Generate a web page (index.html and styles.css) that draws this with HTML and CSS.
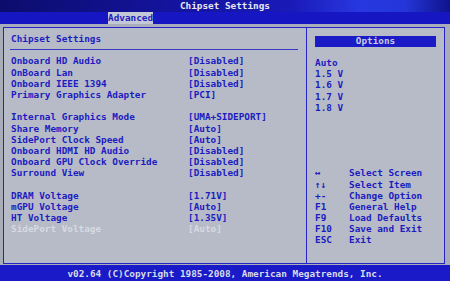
FILE: index.html
```html
<!DOCTYPE html>
<html>
<head>
    <title>Chipset Settings</title>
    <meta charset="utf-8">
    <link rel="stylesheet" href="styles.css">
</head>
<body>
    <div class="title-bar">Chipset Settings</div>
    <div class="menu-bar">
        <span class="tab active">Advanced</span>
    </div>

    <div class="frame">
        <div class="main-panel">
            <div class="panel-title">Chipset Settings</div>
            <div class="rule-row"><div class="rule"></div></div>

            <div class="item"><span class="label">Onboard HD Audio</span><span class="value">[Disabled]</span></div>
            <div class="item"><span class="label">OnBoard Lan</span><span class="value">[Disabled]</span></div>
            <div class="item"><span class="label">Onboard IEEE 1394</span><span class="value">[Disabled]</span></div>
            <div class="item"><span class="label">Primary Graphics Adapter</span><span class="value">[PCI]</span></div>
            <div class="item blank"></div>
            <div class="item"><span class="label">Internal Graphics Mode</span><span class="value">[UMA+SIDEPORT]</span></div>
            <div class="item"><span class="label">Share Memory</span><span class="value">[Auto]</span></div>
            <div class="item"><span class="label">SidePort Clock Speed</span><span class="value">[Auto]</span></div>
            <div class="item"><span class="label">Onboard HDMI HD Audio</span><span class="value">[Disabled]</span></div>
            <div class="item"><span class="label">Onboard GPU Clock Override</span><span class="value">[Disabled]</span></div>
            <div class="item"><span class="label">Surround View</span><span class="value">[Disabled]</span></div>
            <div class="item blank"></div>
            <div class="item"><span class="label">DRAM Voltage</span><span class="value">[1.71V]</span></div>
            <div class="item"><span class="label">mGPU Voltage</span><span class="value">[Auto]</span></div>
            <div class="item"><span class="label">HT Voltage</span><span class="value">[1.35V]</span></div>
            <div class="item selected"><span class="label">SidePort Voltage</span><span class="value">[Auto]</span></div>
        </div>

        <div class="side-panel">
            <div class="options-head">Options</div>
            <ul class="options">
                <li>Auto</li>
                <li>1.5 V</li>
                <li>1.6 V</li>
                <li>1.7 V</li>
                <li>1.8 V</li>
            </ul>
            <ul class="keys">
                <li><span class="key">&#8596;</span>Select Screen</li>
                <li><span class="key">&#8593;&#8595;</span>Select Item</li>
                <li><span class="key">+-</span>Change Option</li>
                <li><span class="key">F1</span>General Help</li>
                <li><span class="key">F9</span>Load Defaults</li>
                <li><span class="key">F10</span>Save and Exit</li>
                <li><span class="key">ESC</span>Exit</li>
            </ul>
        </div>
    </div>

    <div class="footer">v02.64 (C)Copyright 1985-2008, American Megatrends, Inc.</div>
</body>
</html>
```

FILE: styles.css
```css
body {
    margin: 0;
    width: 450px;
    height: 281px;
    overflow: hidden;
    background-color: #a9adb9;
    font-family: "DejaVu Sans Mono", "Liberation Mono", monospace;
    font-size: 9.35px;
    font-weight: bold;
    line-height: 11.2px;
    color: #1c1cc0;
}
.title-bar {
    height: 12px;
    line-height: 12px;
    text-align: center;
    color: #e8e8f2;
    background: linear-gradient(to right, #0c0c6c 0%, #1414a0 40%, #1a1ab8 65%, #2838e0 80%, #2436d8 90%, #10128c 100%);
}
.menu-bar {
    height: 12px;
    background-color: #1616c2;
    display: flex;
}
.tab {
    margin-left: 108px;
    width: 45px;
    line-height: 12px;
}
.tab.active {
    background-color: #c4c8d6;
    color: #1c1cc0;
}
.frame {
    margin: 3px 0 0 3px;
    width: 440px;
    height: 235px;
    border: 1px solid #2424c8;
    background-color: #b7bbc7;
    display: flex;
}
.main-panel {
    width: 295px;
    padding: 5px 0 0 7px;
    border-right: 1px solid #2424c8;
}
.panel-title {
    height: 11.2px;
}
.rule-row {
    height: 11.2px;
    display: flex;
    align-items: center;
}
.rule {
    margin-left: -1px;
    width: 288px;
    height: 1px;
    background-color: #3a3ac8;
}
.item {
    display: flex;
    height: 11.2px;
}
.item .label {
    width: 177px;
}
.item.selected {
    color: #d6dae2;
}
.side-panel {
    flex: 1;
    padding: 8px 0 0 8px;
}
.options-head {
    width: 121px;
    height: 10.5px;
    line-height: 10.5px;
    text-align: center;
    background-color: #1a1ac6;
    color: #c8cce0;
}
.options, .keys {
    list-style: none;
    margin: 0;
    padding: 0;
}
.options {
    margin-top: 10.5px;
}
.options li, .keys li {
    height: 11.2px;
}
.keys {
    margin-top: 54.4px;
}
.key {
    display: inline-block;
    width: 34px;
}
.footer {
    margin-top: 1px;
    height: 16px;
    line-height: 17px;
    text-align: center;
    background-color: #1a1ac8;
    color: #d8dcea;
}
```
